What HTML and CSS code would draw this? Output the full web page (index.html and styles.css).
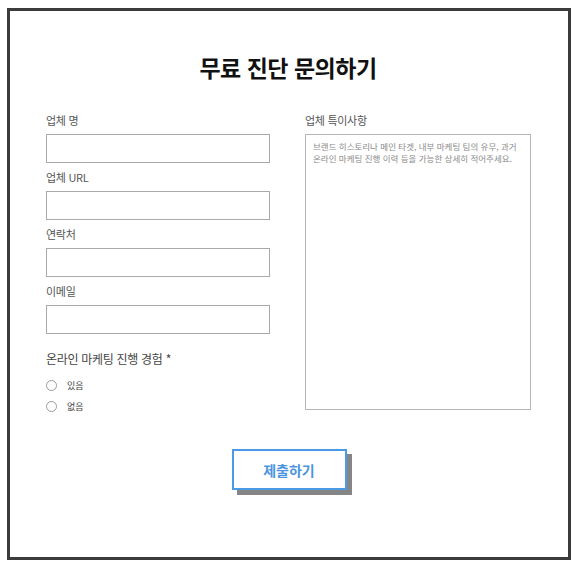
FILE: index.html
```html
<!DOCTYPE html>
<html lang="ko">
<head>
    <meta charset="utf-8">
    <title>무료 진단 문의하기</title>
    <link rel="stylesheet" href="styles.css">
</head>
<body>
    <div class="container">
        <h1 class="title">무료 진단 문의하기</h1>

        <form class="inquiry-form">
            <div class="form-grid">
                <div class="col-left">
                    <div class="field">
                        <label class="field-label">업체 명</label>
                        <input class="input-field" type="text">
                    </div>
                    <div class="field">
                        <label class="field-label">업체 URL</label>
                        <input class="input-field" type="text">
                    </div>
                    <div class="field">
                        <label class="field-label">연락처</label>
                        <input class="input-field" type="text">
                    </div>
                    <div class="field">
                        <label class="field-label">이메일</label>
                        <input class="input-field" type="text">
                    </div>

                    <div class="radio-group">
                        <p class="radio-title">온라인 마케팅 진행 경험 *</p>
                        <label class="radio-option"><input type="radio" name="exp"> 있음</label>
                        <label class="radio-option"><input type="radio" name="exp"> 없음</label>
                    </div>
                </div>

                <div class="col-right">
                    <label class="field-label">업체 특이사항</label>
                    <textarea class="text-area" placeholder="브랜드 히스토리나 메인 타겟, 내부 마케팅 팀의 유무, 과거 온라인 마케팅 진행 이력 등을 가능한 상세히 적어주세요."></textarea>
                </div>
            </div>

            <div class="button-container">
                <button class="submit-button" type="button">제출하기</button>
            </div>
        </form>
    </div>
</body>
</html>
```

FILE: styles.css
```css
body {
    background-color: #ffffff;
    font-family: "Noto Sans CJK KR", "Noto Sans", sans-serif;
    margin: 0;
    padding: 8px 9px 6px 7px;
}

.container {
    box-sizing: border-box;
    width: 564px;
    height: 552px;
    border: 3px solid #3b3b3b;
    padding: 41px 38px 0 36px;
}

.title {
    margin: 0;
    text-align: center;
    font-size: 23px;
    font-weight: 700;
    line-height: 30px;
    color: #111111;
    letter-spacing: -0.5px;
}

.inquiry-form {
    margin-top: 30px;
}

.form-grid {
    display: grid;
    grid-template-columns: 224px 225px;
    column-gap: 35px;
}

.field {
    margin-bottom: 6px;
}

.field-label {
    display: block;
    font-size: 11px;
    line-height: 16px;
    color: #555555;
    margin-bottom: 6px;
    letter-spacing: -0.3px;
}

.input-field {
    display: block;
    box-sizing: border-box;
    width: 224px;
    height: 29px;
    border: 1px solid #a9a9a9;
    margin: 0;
    padding: 0 6px;
    outline: none;
}

.radio-group {
    margin-top: 17px;
}

.radio-title {
    margin: 0 0 8px;
    font-size: 12px;
    line-height: 16px;
    color: #444444;
    letter-spacing: -0.3px;
}

.radio-option {
    display: flex;
    align-items: center;
    gap: 10px;
    height: 21px;
    font-size: 9px;
    color: #444444;
}

.radio-option input {
    appearance: none;
    width: 11px;
    height: 11px;
    margin: 0;
    border: 1px solid #9a9a9a;
    border-radius: 50%;
    background: #ffffff;
}

.text-area {
    display: block;
    box-sizing: border-box;
    width: 226px;
    height: 276px;
    border: 1px solid #b5b5b5;
    padding: 5px 7px;
    margin: 0;
    resize: none;
    font-family: "Noto Sans CJK KR", "Noto Sans", sans-serif;
    font-size: 8.5px;
    line-height: 12px;
    outline: none;
}

.text-area::placeholder {
    color: #8a8a8a;
}

.button-container {
    display: flex;
    justify-content: center;
    margin-top: 32px;
    padding-left: 2px;
}

.submit-button {
    width: 115px;
    height: 41px;
    background-color: #ffffff;
    border: 2px solid #4a9ae6;
    box-shadow: 5px 5px 0 #858585;
    color: #4a94e0;
    font-family: "Noto Sans CJK KR", "Noto Sans", sans-serif;
    font-size: 14px;
    font-weight: 700;
    cursor: pointer;
}
```
